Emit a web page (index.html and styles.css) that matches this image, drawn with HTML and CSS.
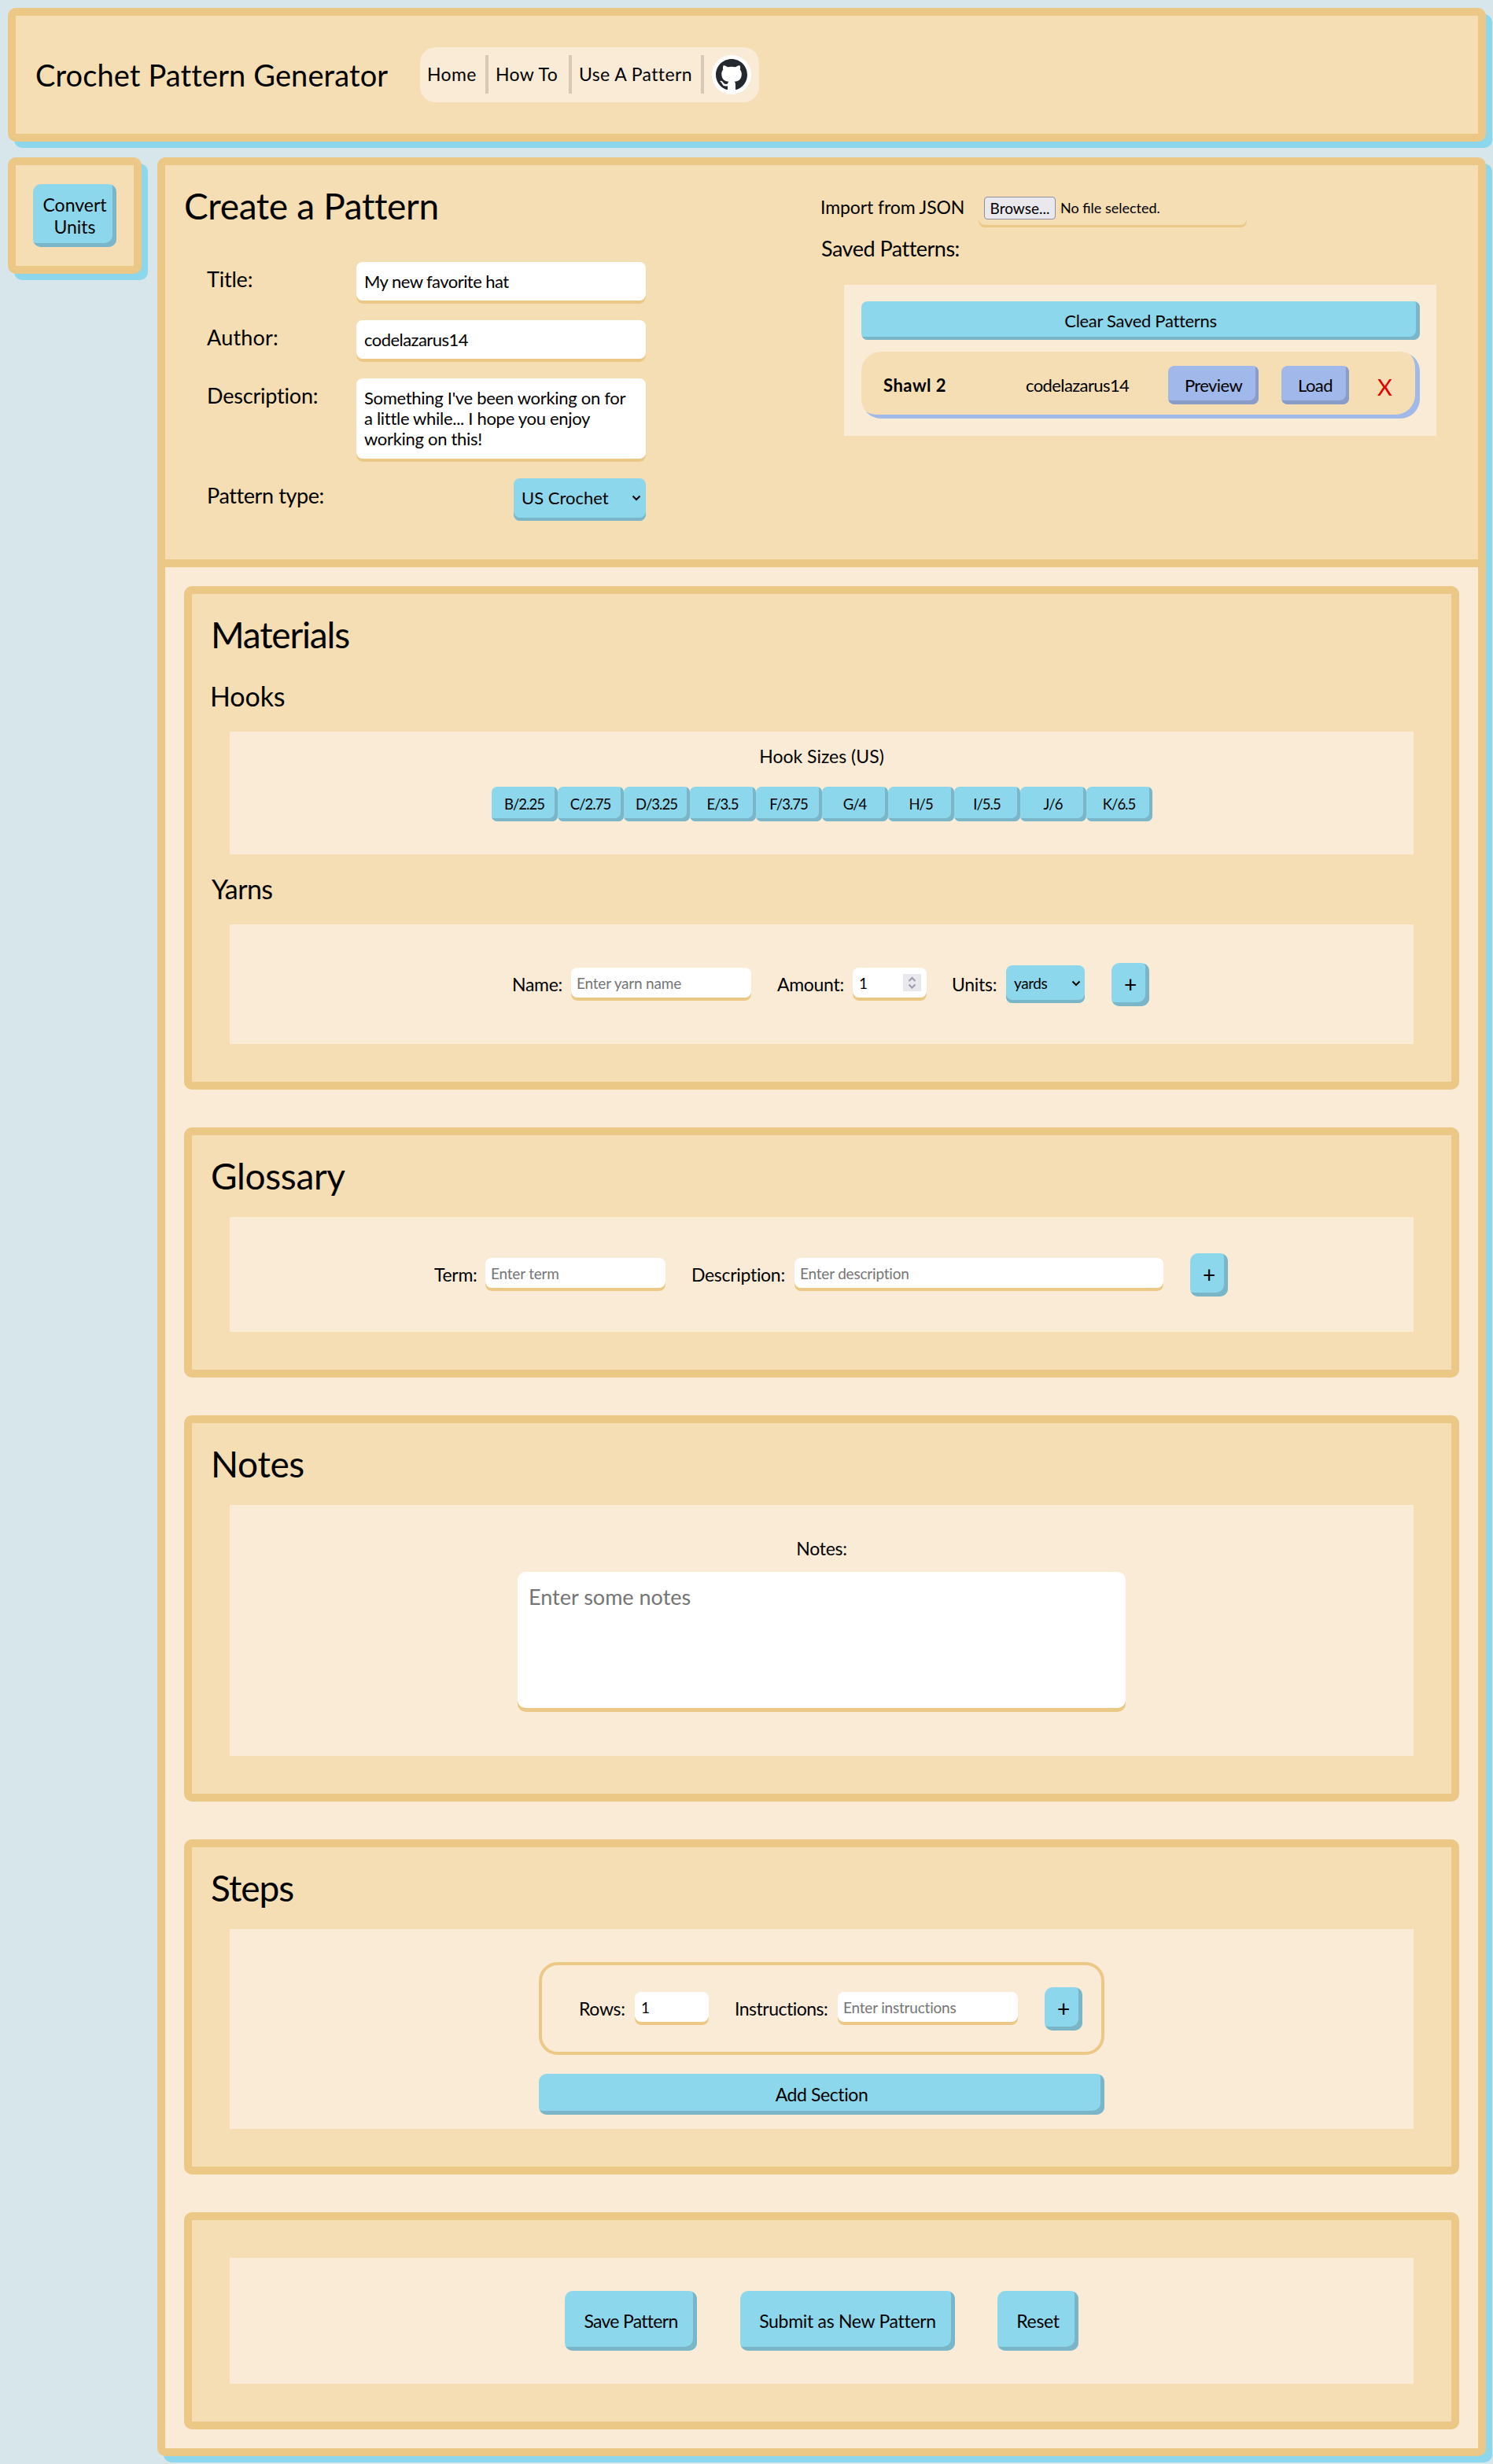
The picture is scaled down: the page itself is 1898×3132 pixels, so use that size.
FILE: index.html
```html
<!DOCTYPE html>
<html lang="en">
<head>
<meta charset="utf-8">
<title>Crochet Pattern Generator</title>
<link rel="stylesheet" href="styles.css">
</head>
<body>
<header class="box header">
  <div class="brand">Crochet Pattern Generator</div>
  <nav class="nav">
    <a class="nav-link home">Home</a>
    <a class="nav-link howto">How To</a>
    <a class="nav-link use">Use A Pattern</a>
    <a class="github"><svg width="40" height="40" viewBox="0 0 16 16" fill="#24292f"><path d="M8 0C3.58 0 0 3.58 0 8c0 3.54 2.29 6.53 5.47 7.59.4.07.55-.17.55-.38 0-.19-.01-.82-.01-1.49-2.01.37-2.53-.49-2.69-.94-.09-.23-.48-.94-.82-1.13-.28-.15-.68-.52-.01-.53.63-.01 1.08.58 1.23.82.72 1.21 1.87.87 2.33.66.07-.52.28-.87.51-1.07-1.78-.2-3.64-.89-3.64-3.95 0-.87.31-1.59.82-2.15-.08-.2-.36-1.02.08-2.12 0 0 .67-.21 2.2.82.64-.18 1.32-.27 2-.27s1.36.09 2 .27c1.53-1.04 2.2-.82 2.2-.82.44 1.1.16 1.92.08 2.12.51.56.82 1.27.82 2.15 0 3.07-1.87 3.75-3.65 3.95.29.25.54.73.54 1.48 0 1.07-.01 1.93-.01 2.2 0 .21.15.46.55.38A8.01 8.01 0 0 0 16 8c0-4.42-3.58-8-8-8z"/></svg></a>
  </nav>
</header>
<div class="columns">
  <aside class="box sidebar"><button class="btn convert">Convert<br>Units</button></aside>
  <main class="box main">
    <section class="intro">
      <div class="create">
        <h1>Create a Pattern</h1>
        <div class="form">
          <label>Title:</label><input class="field author" value="My new favorite hat">
          <label class="wide">Author:</label><input class="field author" value="codelazarus14">
          <label>Description:</label><textarea class="field desc">Something I've been working on for
a little while... I hope you enjoy
working on this!</textarea>
          <label class="tight">Pattern type:</label>
          <div class="select type"><span>US Crochet</span><svg width="12" height="8" viewBox="0 0 12 8"><path d="M1.5 1.5 6 6l4.5-4.5"/></svg></div>
        </div>
      </div>
      <div class="saved">
        <div class="import"><span class="import-label">Import from JSON</span>
          <div class="file"><button class="browse">Browse...</button><span>No file selected.</span></div></div>
        <h4>Saved Patterns:</h4>
        <div class="saved-panel">
          <button class="btn clear">Clear Saved Patterns</button>
          <div class="saved-card">
            <b>Shawl 2</b><span class="by">codelazarus14</span>
            <button class="btn alt preview">Preview</button><button class="btn alt load">Load</button>
            <span class="remove">X</span>
          </div>
        </div>
      </div>
    </section>
    <div class="cards">
      <section class="card">
        <h2 class="materials-title">Materials</h2>
        <h3>Hooks</h3>
        <div class="panel hooks">
          <p>Hook Sizes (US)</p>
          <div class="sizes">
            <button class="btn">B/2.25</button><button class="btn">C/2.75</button><button class="btn">D/3.25</button><button class="btn">E/3.5</button><button class="btn">F/3.75</button><button class="btn">G/4</button><button class="btn">H/5</button><button class="btn">I/5.5</button><button class="btn">J/6</button><button class="btn">K/6.5</button>
          </div>
        </div>
        <h3 class="yarns-title">Yarns</h3>
        <div class="panel row yarn">
          <label class="l-name">Name:</label><input class="small" placeholder="Enter yarn name">
          <label class="l-amount">Amount:</label>
          <div class="small num amount"><span>1</span><svg width="23" height="22" viewBox="0 0 23 22"><rect width="23" height="22" fill="#e9e9ed"/><path d="M7.5 9 11.5 5l4 4M7.5 13.5l4 4 4-4"/></svg></div>
          <label class="l-units">Units:</label>
          <div class="select units"><span>yards</span><svg width="12" height="8" viewBox="0 0 12 8"><path d="M1.5 1.5 6 6l4.5-4.5"/></svg></div>
          <button class="btn plus">+</button>
        </div>
      </section>
      <section class="card">
        <h2>Glossary</h2>
        <div class="panel row glossary">
          <label class="l-term">Term:</label><input class="small" placeholder="Enter term">
          <label class="l-long">Description:</label><input class="small long" placeholder="Enter description">
          <button class="btn plus">+</button>
        </div>
      </section>
      <section class="card">
        <h2>Notes</h2>
        <div class="panel notes">
          <p>Notes:</p>
          <textarea class="field" placeholder="Enter some notes"></textarea>
        </div>
      </section>
      <section class="card">
        <h2 class="steps-title">Steps</h2>
        <div class="panel steps">
          <div class="row step">
            <label class="l-rows">Rows:</label><div class="small num"><span>1</span></div>
            <label class="l-long l-inst">Instructions:</label><input class="small" placeholder="Enter instructions">
            <button class="btn plus">+</button>
          </div>
          <button class="btn add">Add Section</button>
        </div>
      </section>
      <section class="card last">
        <div class="panel actions">
          <button class="btn save">Save Pattern</button><button class="btn submit">Submit as New Pattern</button><button class="btn reset">Reset</button>
        </div>
      </section>
    </div>
  </main>
</div>
</body>
</html>
```
FILE: styles.css
```css
* { box-sizing: border-box; }
html { background: #d7e6eb; }
body {
  margin: 0;
  padding: 10px 9px 10px 10px;
  height: 3132px;
  overflow: hidden;
  font: 23px/28px Lato, "Liberation Sans", sans-serif;
  color: #000;
  letter-spacing: -0.3px;
}
h1, h2, h3, h4, p { margin: 0; font-weight: 400; }
button, input, textarea { font: inherit; color: inherit; letter-spacing: inherit; margin: 0; border: 0; outline: 0; }
svg path { stroke-linejoin: miter; }

.box { background: #f5deb3; border: 10px solid #ebc886; border-radius: 10px; box-shadow: 8px 8px #8cd7eb; }

.header { height: 170px; display: flex; align-items: center; padding-left: 25px; }
.brand { width: 489px; font-size: 38px; line-height: 46px; letter-spacing: 0.12px; padding-bottom: 1px; }
.nav { display: flex; gap: 10px; padding: 10px; height: 70px; background: #faebd7; border-radius: 20px; letter-spacing: 0.4px; }
.nav-link { height: 49px; line-height: 48px; border-right: 4px solid #d5c8b7; white-space: nowrap; }
.home { width: 77px; text-indent: -1px; }
.howto { width: 96px; text-indent: -1px; }
.use { width: 158px; letter-spacing: 0.4px; text-indent: -1px; }
.github { width: 50px; height: 50px; border-radius: 50%; background: #fff; display: flex; align-items: center; justify-content: center; }

.columns { display: flex; gap: 20px; margin-top: 20px; align-items: flex-start; }
.sidebar { width: 170px; height: 148px; padding: 24px 22px; }
.main { flex: 1; height: 2922px; background: #faebd7; }

.btn { background: #8cd7eb; border-radius: 10px; box-shadow: inset -5px -5px #7ab5c8; padding: 0; text-align: center; white-space: nowrap; }
.convert { width: 106px; height: 80px; letter-spacing: 0; }
.alt { background: #a0b8ea; box-shadow: inset -4px -5px #8a9cc8; border-radius: 8px; }

/* Pattern details and saved patterns */
.intro { height: 511px; background: #f5deb3; border-bottom: 10px solid #ebc886; display: flex; }
.create { width: 835px; padding: 24px 0 0 24px; }
h1, h2 { font-size: 46px; line-height: 56px; letter-spacing: -0.35px; }
.form { display: grid; grid-template-columns: 190px 368px; row-gap: 21px; margin: 43px 0 0 29px; }
.form label { font-size: 27px; line-height: 43px; letter-spacing: -0.2px; }
.form .wide { letter-spacing: 0.2px; }
.form .tight { letter-spacing: -0.4px; }
.field { background: #fff; border-radius: 8px; box-shadow: inset 0 -4px #ebc886; font-size: 22px; line-height: 26px; height: 53px; padding: 0 10px 4px; resize: none; overflow: hidden; display: block; }
.author { letter-spacing: -0.55px; }
.desc { height: 106px; padding: 12px 0 0 10px; white-space: pre; }
.select { display: flex; align-items: center; justify-content: space-between; background: #8cd7eb; border-radius: 8px; box-shadow: inset 0 -4px #7ab5c8; }
.select svg path { fill: none; stroke: #000; stroke-width: 2; }
.type { justify-self: end; width: 168px; height: 54px; padding: 0 6px 4px 10px; font-size: 22px; letter-spacing: 0; }

.saved { padding: 31px 0 0; width: 791px; }
.import { display: flex; height: 48px; }
.import-label { width: 199px; line-height: 44px; letter-spacing: -0.1px; margin-left: -2px; margin-right: 2px; }
.file { width: 341px; display: flex; align-items: flex-start; gap: 6px; padding: 9px 7px 0; border-radius: 8px; box-shadow: inset 0 -3px #ebc886; font-size: 18px; line-height: 29px; letter-spacing: 0; }
.browse { width: 91px; height: 29px; padding: 0; font-size: 19px; line-height: 27px; background: #e9e9ed; border: 1px solid #8f8f9d; border-radius: 4px; }
h4 { margin: 11px 0 0 -1px; font-size: 27px; line-height: 32px; letter-spacing: -0.5px; }
.saved-panel { margin: 30px 0 0 28px; width: 753px; height: 192px; padding: 21px 21px 22px 22px; background: #faebd7; display: flex; flex-direction: column; gap: 15px; font-size: 22px; }
.clear { height: 49px; box-shadow: inset -5px -4px #7ab5c8; border-radius: 8px; letter-spacing: -0.3px; }
.saved-card { height: 85px; padding-left: 28px; display: flex; align-items: center; border-radius: 25px; background: #f5deb3; box-shadow: inset -6px -5px #a0b8ea; letter-spacing: -0.6px; }
.saved-card b { width: 181px; letter-spacing: 0.5px; }
.by { width: 181px; }
.preview { width: 115px; height: 49px; margin-right: 29px; }
.load { width: 86px; height: 49px; margin-right: 36px; }
.remove { font-size: 29px; color: #e00000; padding-top: 4px; }

/* Cards */
.cards { padding: 24px; display: flex; flex-direction: column; gap: 48px; }
.card { background: #f5deb3; border: 10px solid #ebc886; border-radius: 10px; padding: 24px 48px 48px; }
.last { padding-top: 48px; }
h2 { margin: 0 0 24px -24px; }
h2.materials-title { margin-bottom: 30px; letter-spacing: -1.2px; }
h2.steps-title { letter-spacing: -1px; }
h3 { margin: 0 0 25px -25px; font-size: 34px; line-height: 40px; letter-spacing: -0.1px; }
h3.yarns-title { margin-top: 24px; margin-left: -23px; letter-spacing: -0.6px; }
.panel { background: #faebd7; }
.hooks { height: 156px; padding-top: 17px; text-align: center; }
.hooks p { letter-spacing: 0; }
.sizes { display: flex; justify-content: center; margin-top: 25px; }
.sizes .btn { width: 84px; height: 44px; font-size: 18.5px; letter-spacing: -1px; border-radius: 7px; box-shadow: inset -4px -4px #7ab5c8; }

.row { display: flex; align-items: center; }
.small { width: 229px; height: 42px; padding: 0 8px 4px 7px; font-size: 19px; line-height: 23px; letter-spacing: -0.2px; background: #fff; border-radius: 8px; box-shadow: inset 0 -4px #ebc886; }
::placeholder { color: #757575; opacity: 1; }
.long { width: 469px; }
.num { width: 94px; display: flex; align-items: center; justify-content: space-between; padding-left: 8px; }
.num svg path { fill: none; stroke: #9a9aa8; stroke-width: 2; }
.num.amount { padding-right: 7px; }
.units { width: 100px; height: 48px; padding: 0 5px 2px 10px; font-size: 19px; letter-spacing: -0.45px; box-shadow: inset 0 -4px #7ab5c8; }
.plus { width: 48px; height: 55px; margin-left: 34px; font-size: 28px; letter-spacing: 0; }
.yarn { height: 152px; padding-left: 359px; }
.l-name { width: 75px; }
.l-amount { width: 96px; margin-left: 33px; }
.l-units { width: 69px; margin-left: 32px; }
.glossary { height: 146px; padding-left: 260px; }
.l-term { width: 65px; }
.l-long { width: 131px; margin-left: 33px; }
.l-inst { letter-spacing: -0.5px; }
.l-rows { width: 71px; }

.notes { height: 319px; padding-top: 41px; text-align: center; }
.notes textarea { margin: 16px auto 0; width: 773px; height: 178px; padding: 15px 14px 0; font-size: 27px; line-height: 34px; letter-spacing: 0; border-radius: 10px; box-shadow: inset 0 -5px #ebc886; }
.steps { height: 254px; padding-top: 42px; display: flex; flex-direction: column; align-items: center; }
.step { width: 719px; height: 118px; padding-left: 47px; border: 4px solid #ebc886; border-radius: 24px; }
.add { width: 719px; height: 52px; margin-top: 24px; letter-spacing: -0.4px; }
.actions { height: 160px; display: flex; align-items: center; justify-content: center; }
.actions .btn { height: 76px; }
.save { width: 168px; margin-right: 55px; letter-spacing: -0.7px; }
.submit { width: 273px; margin-right: 54px; }
.reset { width: 103px; }
```
